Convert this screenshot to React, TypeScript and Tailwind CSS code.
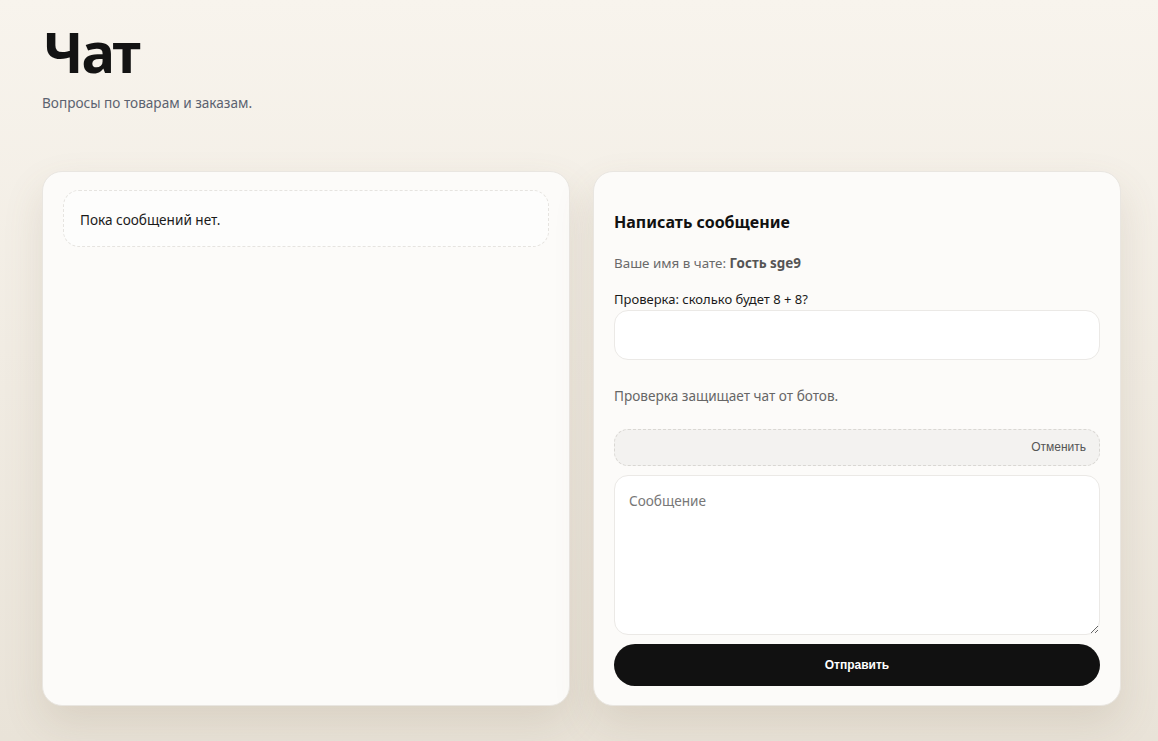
import React from "react";

export default function App() {
  return (
    <div
      className="min-h-[741px] w-full bg-gradient-to-b from-[#f8f4ed] to-[#e9e3d8] text-[#141414]"
      style={{ fontFamily: '"Noto Sans", "Open Sans", sans-serif' }}
    >
      <div className="ml-[42px] w-[1079px] pt-[15px] pb-[34px]">
        <h1 className="text-[56px] font-bold leading-[72px] tracking-[-1.8px] text-[#131313] ml-[1px]">
          Чат
        </h1>
        <p className="mt-[7px] text-[13.6px] leading-[18px] text-[#5b6270]">
          Вопросы по товарам и заказам.
        </p>

        <div className="mt-[59px] grid grid-cols-2 gap-[23px]">
          <section className="h-[535px] rounded-[20px] border border-[#e9e6e1] bg-[#fcfbf9] px-[20px] pt-[18px] shadow-[0_18px_40px_rgba(120,100,70,0.14)]">
            <div className="flex h-[57px] items-center rounded-[16px] border border-dashed border-[#e6e4e0] bg-[#fdfdfc] px-[16px] pt-[4px] text-[13.6px] text-[#1a1a1a]">
              Пока сообщений нет.
            </div>
          </section>

          <section className="flex h-[535px] flex-col rounded-[20px] border border-[#e9e6e1] bg-[#fcfbf9] px-[20px] pt-[39px] pb-[19px] shadow-[0_18px_40px_rgba(120,100,70,0.14)]">
            <h2 className="text-[16px] font-bold leading-[22px] text-[#111]">
              Написать сообщение
            </h2>
            <p className="mt-[21px] text-[13.4px] leading-[18px] text-[#6a6a6a]">
              Ваше имя в чате: <b className="font-bold text-[#555]">Гость sge9</b>
            </p>
            <label className="mt-[18px] block text-[13px] leading-[18px] text-[#1a1a1a]">
              Проверка: сколько будет 8 + 8?
            </label>
            <input
              type="text"
              className="mt-[2px] h-[50px] w-full rounded-[14px] border border-[#ebe9e6] bg-white px-[14px] text-[14px] outline-none"
            />
            <p className="mt-[27px] text-[13.6px] leading-[18px] text-[#666]">
              Проверка защищает чат от ботов.
            </p>
            <div
              className="mt-[24px] flex h-[37px] items-center justify-end rounded-[14px] border border-dashed border-[#d9d7d3] bg-[#f3f2f0] px-[13px] text-[12px] text-[#555]"
              style={{ fontFamily: '"Liberation Sans", Arial, sans-serif' }}
            >
              Отменить
            </div>
            <textarea
              placeholder="Сообщение"
              className="mt-[9px] h-[161px] w-full resize-y rounded-[14px] border border-[#ebe9e6] bg-white px-[14px] py-[16px] text-[13.6px] leading-[18px] text-[#222] placeholder:text-[#777] outline-none"
            />
            <button
              className="mt-[9px] h-[42px] w-full rounded-full bg-[#111] text-[12px] font-bold text-white"
              style={{ fontFamily: '"Liberation Sans", Arial, sans-serif' }}
            >
              Отправить
            </button>
          </section>
        </div>
      </div>
    </div>
  );
}
